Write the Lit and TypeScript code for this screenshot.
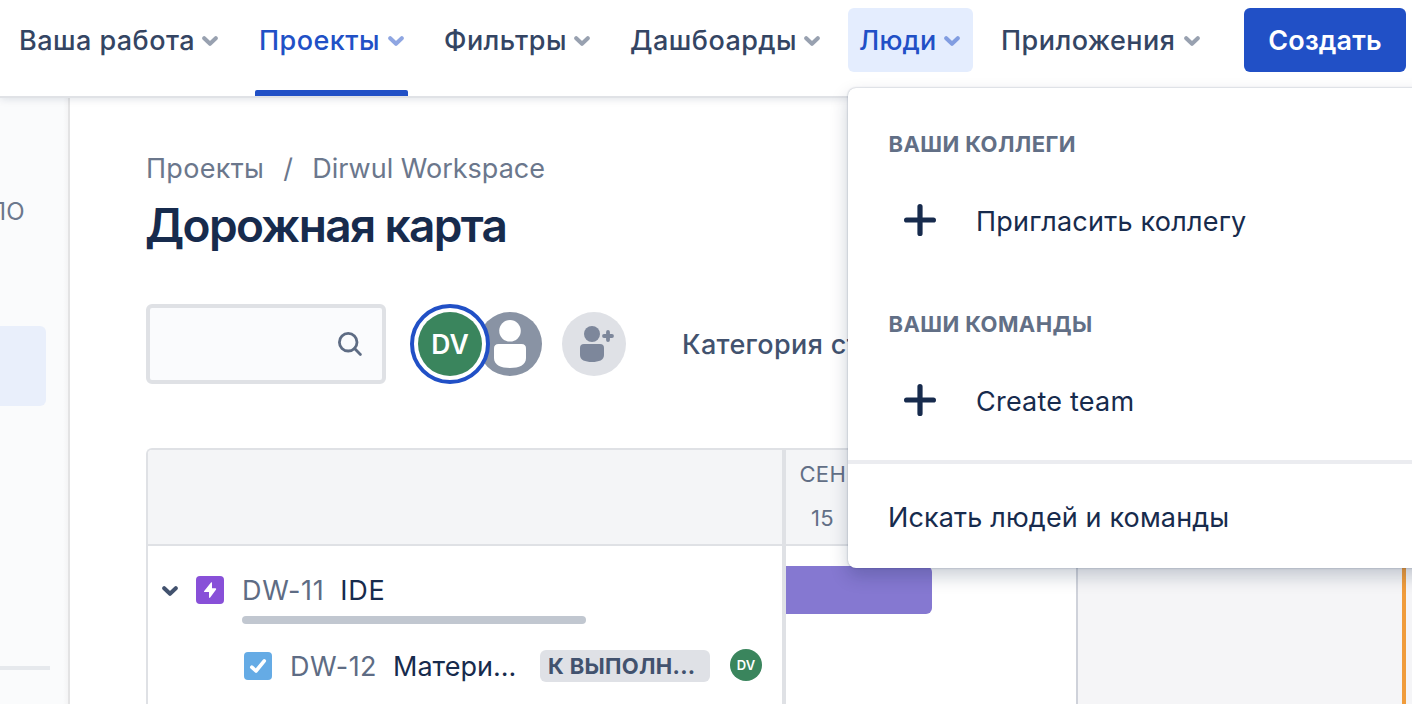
import { LitElement, html, css } from "lit";
import { customElement } from "lit/decorators.js";
import { classMap } from "lit/directives/class-map.js";

interface NavItem { label: string; size: string; current?: boolean; open?: boolean; }

const NAV: NavItem[] = [
  { label: "Ваша работа", size: "work" },
  { label: "Проекты", size: "projects", current: true },
  { label: "Фильтры", size: "filters" },
  { label: "Дашбоарды", size: "boards" },
  { label: "Люди", size: "people", open: true },
  { label: "Приложения", size: "apps" },
];

const chevron = html`<svg class="chevron" width="16" height="10" viewBox="0 0 16 10">
  <path d="M2.2 2.2L8 7.8L13.8 2.2" fill="none" stroke="currentColor" stroke-width="4" stroke-linecap="round" stroke-linejoin="round"/>
</svg>`;

const plus = html`<svg class="plus" width="32" height="32" viewBox="0 0 32 32">
  <path d="M16 2.6V29.4M2.6 16H29.4" stroke="currentColor" stroke-width="5.2" stroke-linecap="round"/>
</svg>`;

@customElement("top-nav")
class TopNav extends LitElement {
  static styles = css`
    :host { display: block; position: relative; z-index: 2; }
    .bar { display: flex; height: 96px; background: #fff; padding-left: 6px; box-sizing: border-box;
      box-shadow: 0 2px 0 #e0e2e6, 0 3px 8px rgba(9,30,66,.13); }
    .items { display: flex; gap: 15px; }
    .item { display: flex; flex-direction: column; justify-content: space-between; height: 96px; box-sizing: border-box; padding-top: 8px; color: #344563; }
    .button { height: 64px; box-sizing: border-box; padding: 0 13px 0 12px; border-radius: 6px; display: flex; align-items: center; justify-content: space-between; white-space: nowrap; font-weight: 500; font-size: 27px; letter-spacing: .45px; }
    .work { width: 225px; } .projects { width: 171px; } .filters { width: 171px; }
    .boards { width: 215px; } .people { width: 125px; } .apps { width: 225px; }
    .work .button, .projects .button, .apps .button { padding-left: 13px; }
    .people .button { padding-left: 11px; letter-spacing: .2px; }
    .current, .open { color: #2150c6; }
    .open .button { background: #e4edfe; }
    .marker { height: 6px; margin: 0 9px; background: #2150c6; border-radius: 2px 2px 0 0; }
    .chevron { opacity: .5; margin-top: 2px; flex: none; }
    .create { width: 162px; height: 64px; margin: 8px 0 0 31px; border-radius: 6px; background: #2150c6; color: #fff; font-weight: 600; font-size: 27px; letter-spacing: .1px; display: flex; align-items: center; justify-content: center; }
  `;
  render() {
    return html`<div class="bar">
      <div class="items">
        ${NAV.map(n => html`<div class=${classMap({ item: true, [n.size]: true, current: !!n.current, open: !!n.open })}>
          <div class="button"><span>${n.label}</span>${chevron}</div>
          ${n.current ? html`<div class="marker"></div>` : ""}
        </div>`)}
      </div>
      <div class="create"><span>Создать</span></div>
    </div>`;
  }
}

@customElement("people-menu")
class PeopleMenu extends LitElement {
  static styles = css`
    :host { display: block; box-sizing: border-box; width: 600px; height: 480px; background: #fff; border-radius: 8px; padding-top: 36px;
      box-shadow: 0 0 2px rgba(9,30,66,.35), 0 8px 18px rgba(9,30,66,.22); color: #172b4d; font-size: 27px; letter-spacing: .22px; }
    .heading { padding-left: 40.5px; height: 40px; line-height: 40px; font-size: 22px; font-weight: 700; letter-spacing: .4px; color: #626f86; }
    .entry { display: flex; align-items: center; height: 80px; margin-top: 16px; padding-left: 56px; gap: 40px; }
    .entry + .heading { margin-top: 44px; }
    .footer { margin-top: 20px; border-top: 4px solid #ebecf0; height: 104px; display: flex; align-items: center; padding-left: 40px; letter-spacing: .14px; }
    .footer span { padding-top: 3px; }
    .entry span { padding-top: 3px; }
  `;
  render() {
    return html`
      <div class="heading">ВАШИ КОЛЛЕГИ</div>
      <div class="entry">${plus}<span>Пригласить коллегу</span></div>
      <div class="heading">ВАШИ КОМАНДЫ</div>
      <div class="entry">${plus}<span>Create team</span></div>
      <div class="footer"><span>Искать людей и команды</span></div>`;
  }
}

@customElement("app-root")
class AppRoot extends LitElement {
  static styles = css`
    :host { display: block; position: relative; width: 1412px; height: 704px; overflow: hidden; background: #fff;
      font-family: Inter, "Noto Sans", sans-serif; font-size: 27px; color: #172b4d; white-space: nowrap; }
    .body { display: flex; height: 608px; }
    .side { width: 70px; box-sizing: border-box; flex: none; background: linear-gradient(90deg, #fafbfc 63px, #f4f4f5 68px); border-right: 2px solid #e3e3e4; overflow: hidden; }
    .kind { width: 24.5px; height: 30px; margin-top: 101px; line-height: 30px; font-size: 24px; color: #6b778c; display: flex; justify-content: flex-end; }
    .selected { width: 46px; height: 80px; margin-top: 99px; border-radius: 0 6px 6px 0; background: #e9effb; }
    .rule { width: 50px; height: 4px; margin-top: 260px; background: #e6e9ed; }
    main { flex: 1; min-width: 0; padding-left: 76px; overflow: hidden; }
    .crumbs { display: flex; margin-top: 53px; height: 40px; line-height: 40px; color: #6b778c; }
    .crumbs .parent { letter-spacing: .3px; }
    .crumbs .sep { width: 48px; text-align: center; }
    h1 { margin: 9px 0 0 -1px; height: 54px; line-height: 54px; font-size: 46px; font-weight: 600; letter-spacing: -1.65px; }
    .tools { display: flex; align-items: center; margin-top: 52px; height: 80px; }
    .search { width: 240px; height: 80px; box-sizing: border-box; border: 4px solid #dfe1e5; border-radius: 6px; background: #fafbfd; display: flex; align-items: center; justify-content: flex-end; padding-right: 19px; color: #5e6c84; }
    .ring { width: 80px; height: 80px; box-sizing: border-box; margin-left: 24px; border: 4px solid #2150c6; border-radius: 50%; background: #fff; padding: 4px; z-index: 1; }
    .dv { background: #3a855d; color: #fff; border-radius: 50%; display: flex; align-items: center; justify-content: center; font-weight: 600; }
    .large { width: 64px; height: 64px; font-size: 26.5px; }
    .small { width: 32px; height: 32px; font-size: 13px; font-weight: 600; margin: -2px 0 0 20px; }
    .anon { margin-left: -12px; } .add { margin-left: 20px; }
    .filter { margin-left: 56px; font-weight: 500; letter-spacing: .35px; color: #42526e; }
    .board { margin-top: 64px; display: grid; grid-template-columns: 634px 4px 1fr; grid-template-rows: 94px 2px 1fr; height: 262px; border: 2px solid #dfe1e5; border-right: 0; border-bottom: 0; border-radius: 6px 0 0 0; overflow: hidden; }
    .head { background: #f4f5f7; }
    .line { background: #dfe1e5; }
    .split { grid-column: 2; grid-row: 1 / 4; background: #dfe1e5; }
    .c1 { grid-column: 1; } .c3 { grid-column: 3; } .r1 { grid-row: 1; } .r2 { grid-row: 2; } .r3 { grid-row: 3; }
    .dates { font-size: 22px; letter-spacing: .3px; color: #626f86; padding-left: 13.5px; line-height: 30px; }
    .month { margin-top: 9px; } .day { margin: 14px 0 0 11.5px; }
    .rows { padding-top: 20px; }
    .epic { display: flex; padding-left: 14px; height: 58px; box-sizing: border-box; }
    .epic .chevron { margin: 20px 18px 0 0; color: #42526e; }
    .epic .type { margin: 10px 18px 0 0; }
    .epic-text { width: 344px; }
    .names { display: flex; gap: 16px; height: 50px; line-height: 49px; letter-spacing: .65px; }
    .progress { height: 8px; border-radius: 4px; background: #c1c7d0; }
    .key { color: #5e6c84; }
    .task { display: flex; align-items: center; padding-left: 96px; height: 32px; margin-top: 26px; }
    .task .key { margin-left: 18px; width: 103px; letter-spacing: .5px; }
    .summary { width: 147px; }
    .lozenge { width: 170px; height: 32px; box-sizing: border-box; padding-left: 8px; border-radius: 6px; background: #dfe1e6; color: #42526e; font-size: 22px; font-weight: 700; letter-spacing: .3px; line-height: 32px; }
    .track { display: grid; grid-template-columns: 290px 2px 324px 4px 1fr; }
    .weekend { background: #f5f5f7; } .gridline { background: #cfd2da; } .today { background: #f09c3c; }
    .span { margin-top: 20px; width: 146px; height: 48px; background: #8578d1; border-radius: 0 6px 6px 0; }
    people-menu { position: absolute; left: 848px; top: 88px; z-index: 3; }
  `;
  render() {
    return html`
      <top-nav></top-nav>
      <div class="body">
        <div class="side">
          <div class="kind"><span>ПО</span></div>
          <div class="selected"></div>
          <div class="rule"></div>
        </div>
        <main>
          <div class="crumbs"><span class="parent">Проекты</span><span class="sep">/</span><span>Dirwul Workspace</span></div>
          <h1>Дорожная карта</h1>
          <div class="tools">
            <div class="search">
              <svg width="26" height="26" viewBox="0 0 26 26" fill="none" stroke="currentColor" stroke-width="2.8" stroke-linecap="round"><circle cx="11.2" cy="11.2" r="8.8"/><path d="M17.6 17.6L23.4 23.4"/></svg>
            </div>
            <div class="ring"><div class="dv large"><span>DV</span></div></div>
            <svg class="anon" width="64" height="64" viewBox="0 0 64 64"><circle cx="32" cy="32" r="32" fill="#8993a4"/><circle cx="32" cy="18.8" r="10.8" fill="#fff"/><path d="M16 36.5Q16 32 20.5 32H43.5Q48 32 48 36.5V46C48 53 41 56 32 56S16 53 16 46Z" fill="#fff"/></svg>
            <svg class="add" width="64" height="64" viewBox="0 0 64 64"><circle cx="32" cy="32" r="32" fill="#dfe1e6"/><g fill="#7d879b"><circle cx="30" cy="22" r="8"/><path d="M18 36Q18 32 22 32H38Q42 32 42 36V43C42 48 37 50 30 50S18 48 18 43Z"/></g><path d="M46 20V28M42 24H50" stroke="#7d879b" stroke-width="3.8" stroke-linecap="round"/></svg>
            <span class="filter">Категория статуса</span>
          </div>
          <div class="board">
            <div class="head c1 r1"></div>
            <div class="line c1 r2"></div>
            <div class="rows c1 r3">
              <div class="epic">
                ${chevron}
                <svg class="type" width="28" height="28" viewBox="0 0 28 28"><rect width="28" height="28" rx="4" fill="#8850d8"/><path d="M15.2 6.3L8 15.2Q7.7 16 8.6 16H13V21Q13.1 22.5 14.2 21.6L20.1 13.5Q20.5 12.3 19.3 12.2H16V7Q16 5.9 15.2 6.3Z" fill="#fff"/></svg>
                <div class="epic-text">
                  <div class="names"><span class="key">DW-11</span><span>IDE</span></div>
                  <div class="progress"></div>
                </div>
              </div>
              <div class="task">
                <svg width="28" height="28" viewBox="0 0 28 28"><rect width="28" height="28" rx="4" fill="#65abe5"/><path d="M7.8 15.2L12 19L20.3 8.8" fill="none" stroke="#fff" stroke-width="3.6" stroke-linecap="round" stroke-linejoin="round"/></svg>
                <span class="key">DW-12</span><span class="summary">Матери...</span>
                <span class="lozenge">К ВЫПОЛН...</span>
                <div class="dv small"><span>DV</span></div>
              </div>
            </div>
            <div class="split"></div>
            <div class="head dates c3 r1"><div class="month">СЕН</div><div class="day">15</div></div>
            <div class="line c3 r2"></div>
            <div class="track c3 r3">
              <div><div class="span"></div></div>
              <div class="gridline"></div><div class="weekend"></div><div class="today"></div><div class="weekend"></div>
            </div>
          </div>
        </main>
      </div>
      <people-menu></people-menu>`;
  }
}
